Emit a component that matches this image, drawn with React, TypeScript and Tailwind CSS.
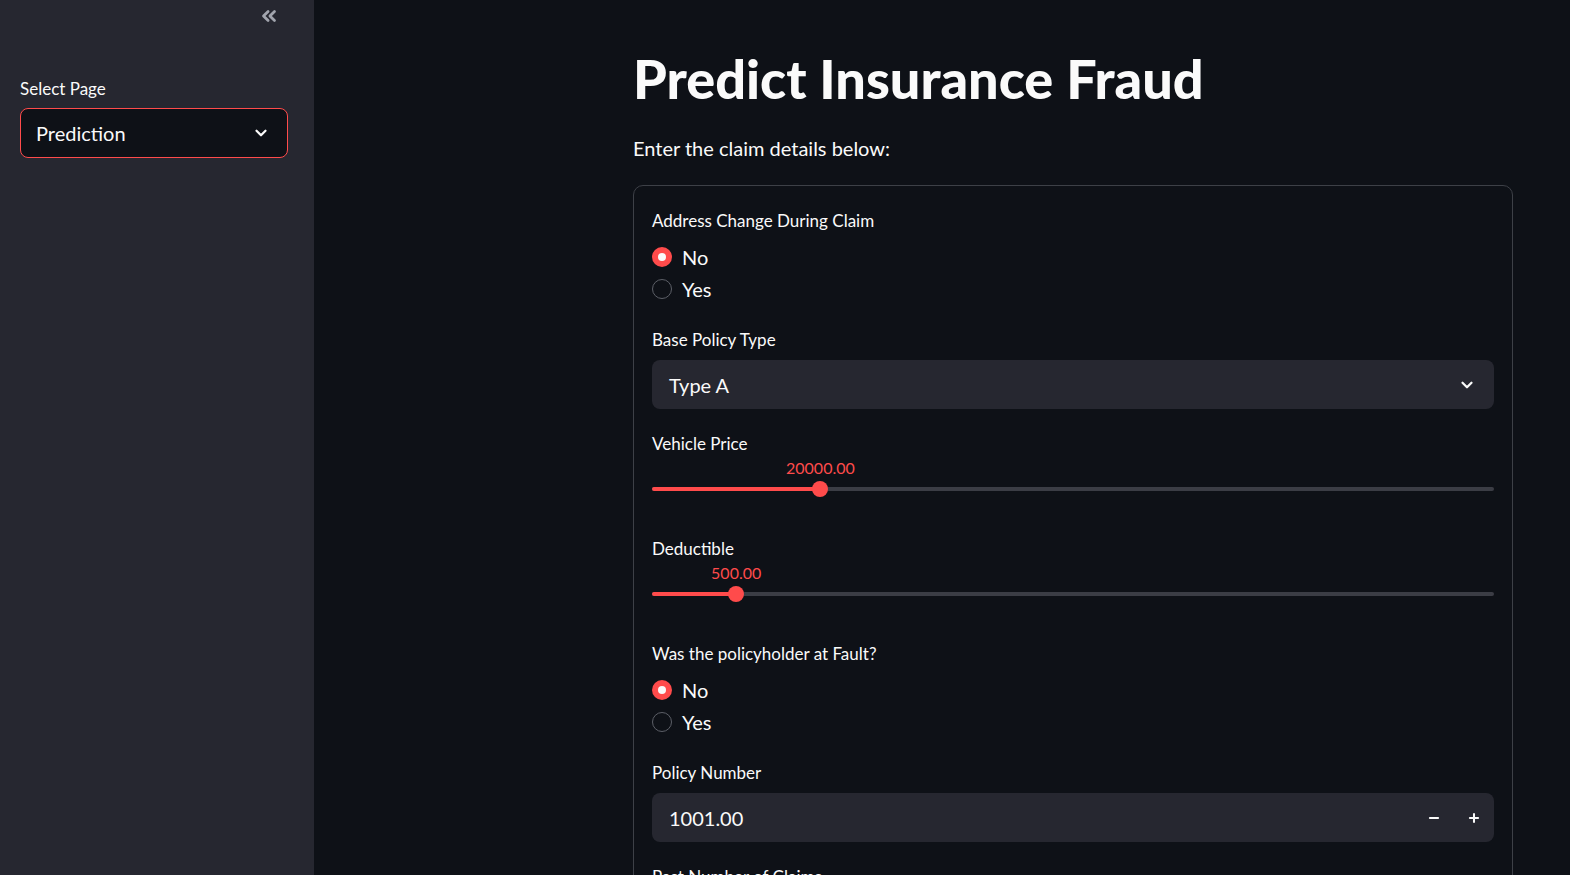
import { ChevronDown, ChevronsLeft, Minus, Plus } from "lucide-react";

const font = { fontFamily: "Lato, 'Liberation Sans', sans-serif" };

function Label({ children }: { children: React.ReactNode }) {
  return <p className="text-[17px] leading-[24px] text-[#fafafa]">{children}</p>;
}

function RadioGroup({ label, value }: { label: string; value: string }) {
  return (
    <div>
      <Label>{label}</Label>
      <div className="mt-2 flex flex-col">
        {["No", "Yes"].map((opt) => (
          <div key={opt} className="flex h-8 items-center gap-[10px]">
            {opt === value ? (
              <span className="flex h-5 w-5 items-center justify-center rounded-full bg-[#ff4b4b]">
                <span className="h-2 w-2 rounded-full bg-[#fafafa]" />
              </span>
            ) : (
              <span className="h-5 w-5 rounded-full border border-[#5c5f67]" />
            )}
            <span className="text-[20px] text-[#fafafa]">{opt}</span>
          </div>
        ))}
      </div>
    </div>
  );
}

function Slider({ label, value, pct }: { label: string; value: string; pct: number }) {
  return (
    <div>
      <Label>{label}</Label>
      <div className="relative h-[58px]">
        <span
          className="absolute top-[1px] -translate-x-1/2 text-[16px] leading-[22px] text-[#ff4b4b]"
          style={{ left: `${pct}%` }}
        >
          {value}
        </span>
        <div className="absolute left-0 right-0 top-[31px] h-[4px] rounded-full bg-[#3b3d45]" />
        <div
          className="absolute left-0 top-[31px] h-[4px] rounded-full bg-[#ff4b4b]"
          style={{ width: `${pct}%` }}
        />
        <span
          className="absolute top-[25px] h-4 w-4 -translate-x-1/2 rounded-full bg-[#ff4b4b]"
          style={{ left: `${pct}%` }}
        />
      </div>
    </div>
  );
}

export default function App() {
  return (
    <div className="flex h-[875px] w-[1570px] overflow-hidden bg-[#0e1117] text-[#fafafa]" style={font}>
      {/* SIDEBAR */}
      <aside className="w-[314px] shrink-0 bg-[#262730] pl-5 pr-[26px]">
        <div className="flex justify-end pr-[8px] pt-[5px]">
          <ChevronsLeft size={22} strokeWidth={3} className="text-[#a1a4ad]" />
        </div>
        <div className="mt-[50px]">
          <Label>Select Page</Label>
          <div className="mt-[7px] flex h-[50px] items-center justify-between rounded-lg border border-[#ff4b4b] bg-[#0e1117] pl-[15px] pr-[17px]">
            <span className="text-[20px]">Prediction</span>
            <ChevronDown size={18} strokeWidth={3} />
          </div>
        </div>
      </aside>

      {/* MAIN */}
      <main className="pl-[319px]">
        <div className="w-[880px] pt-[48px]">
          <h1 className="text-[54px] font-black leading-[62px]">Predict Insurance Fraud</h1>
          <p className="mt-[23px] text-[20px] leading-[30px]">Enter the claim details below:</p>

          <div className="mt-[22px] rounded-[10px] border border-[#3d4047] px-[18px] pb-10 pt-[23px]">
            <div className="flex flex-col gap-[23px]">
              <RadioGroup label="Address Change During Claim" value="No" />

              <div>
                <Label>Base Policy Type</Label>
                <div className="mt-2 flex h-[49px] items-center justify-between rounded-lg bg-[#262730] pl-[17px] pr-[18px]">
                  <span className="text-[20px]">Type A</span>
                  <ChevronDown size={18} strokeWidth={3} />
                </div>
              </div>

              <Slider label="Vehicle Price" value="20000.00" pct={20} />
              <Slider label="Deductible" value="500.00" pct={10} />

              <RadioGroup label="Was the policyholder at Fault?" value="No" />

              <div>
                <Label>Policy Number</Label>
                <div className="mt-2 flex h-[49px] items-center justify-between rounded-lg bg-[#262730] pl-[17px]">
                  <span className="text-[20px]">1001.00</span>
                  <div className="flex h-full items-center">
                    <span className="flex h-full w-10 items-center justify-center">
                      <Minus size={14} strokeWidth={3.5} />
                    </span>
                    <span className="flex h-full w-10 items-center justify-center">
                      <Plus size={14} strokeWidth={3.5} />
                    </span>
                  </div>
                </div>
              </div>

              <div>
                <Label>Past Number of Claims</Label>
              </div>
            </div>
          </div>
        </div>
      </main>
    </div>
  );
}
